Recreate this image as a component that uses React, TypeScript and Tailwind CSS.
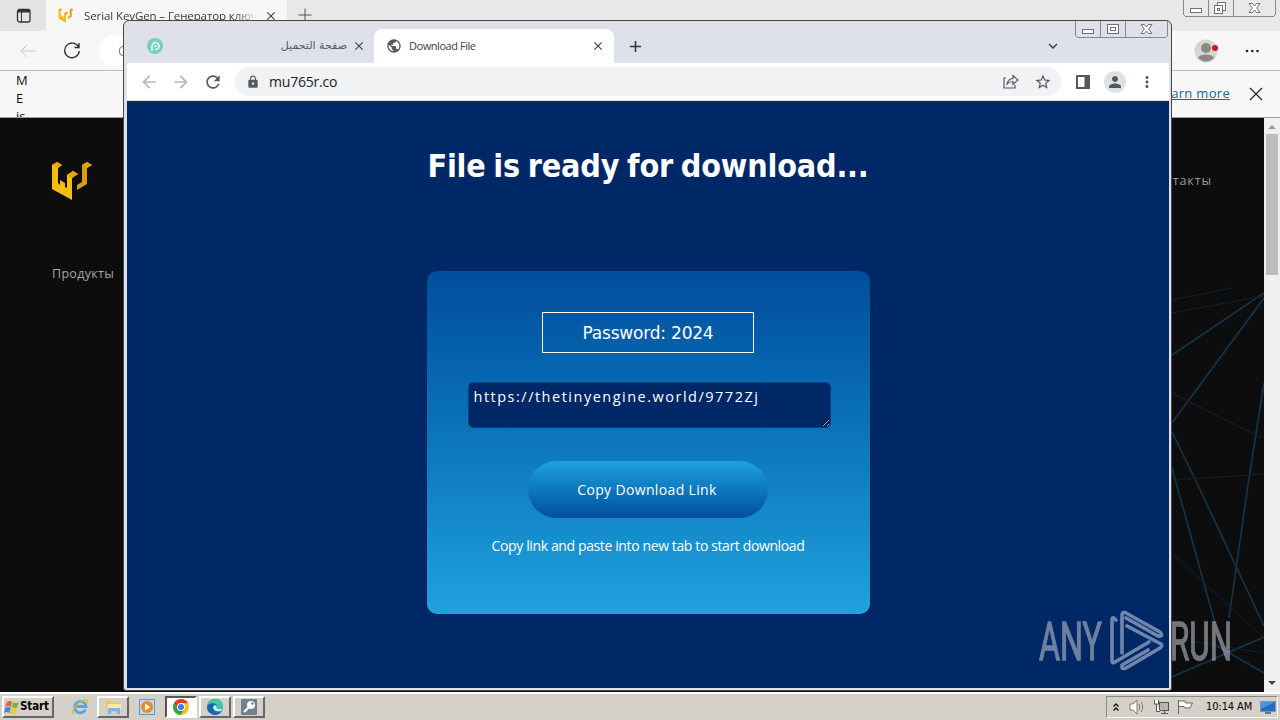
import type { ReactNode } from 'react';
import {
  MdArrowBack,
  MdArrowForward,
  MdClose,
  MdAdd,
  MdLock,
  MdMoreVert,
  MdPerson,
  MdPublic,
  MdRefresh,
  MdStarBorder,
  MdKeyboardArrowDown,
} from 'react-icons/md';

function KeygenLogo({ className }: { className?: string }) {
  return (
    <svg viewBox="0 0 40 40" className={className}>
      <path d="M0 4 L5 1 L10 4 L6 7 V22 L8 24 V19 L13 22 V26 L15 27 V14 L21 10 L26 13 L20 17 V39 L0 28Z" fill="#f9bd10" />
      <path d="M30 4 L35 1 L40 4 L35 7 V23 L25 29 V24 L30 21Z" fill="#dc9c0c" />
      <path d="M0 4 L5 1 L10 4 L6 7Z M15 14 L21 10 L26 13 L20 17Z M30 4 L35 1 L40 4 L35 7Z" fill="#eaa30a" />
    </svg>
  );
}

/* Classic caption buttons, hanging from the top edge of a window */
function CaptionButtons({ restore }: { restore?: boolean }) {
  return (
    <svg width="93" height="17" viewBox="0 0 93 17" fill="none" stroke="#6f7277" shapeRendering="crispEdges">
      <path d="M.5 0 V14.5 L2.5 16.5 H90.5 L92.5 14.5 V0 M25.5 0 V16 M50.5 0 V16" stroke="#85888d" />
      <rect x="7.5" y="8.5" width="11" height="4" rx="1" fill="#fff" />
      {restore ? (
        <g fill="#fff">
          <rect x="34.5" y="2.5" width="8" height="8" />
          <rect x="31.5" y="5.5" width="8" height="8" />
          <rect x="34.5" y="8.5" width="2" height="2" />
        </g>
      ) : (
        <g fill="#fff">
          <rect x="32.5" y="3.5" width="11" height="9" rx="1" />
          <rect x="35.5" y="6.5" width="5" height="3" />
        </g>
      )}
      <path
        d="M66 3.5 H69.5 L71.5 6 L73.500 3.5 H77 L73.700 8 L77 12.500 H73.500 L71.500 10 L69.500 12.500 H66 L69.300 8Z"
        fill="#fff"
        shapeRendering="auto"
      />
    </svg>
  );
}

function EdgeWindow() {
  return (
    <div className="flex h-[692px] w-full flex-col">
      <div className="flex h-[31px] bg-[#e8e8e8]">
        <div className="flex w-[46px] items-center justify-center rounded-br bg-[#e3e3e3]">
          <svg width="16" height="16" viewBox="0 0 16 16" fill="none" stroke="#333" className="ml-0.5">
            <rect x="1.500" y="1.500" width="12.500" height="12.500" rx="2" strokeWidth="1.300" />
            <path d="M2 3 H14" strokeWidth="3" />
            <path d="M5.500 4 V14" />
          </svg>
        </div>
        <div className="flex w-[241px] items-center bg-[#f7f7f7] pl-3">
          <KeygenLogo className="h-[15px] w-4" />
          <span className="ml-2.5 w-[174px] overflow-hidden bg-gradient-to-r from-[#333] from-85% to-[#f7f7f7] bg-clip-text font-['Open_Sans',sans-serif] text-[11.500px] tracking-[-0.1px] whitespace-nowrap text-transparent">
            Serial KeyGen – Генератор ключ
          </span>
          <MdClose className="ml-1.5 size-3.5 text-[#444]" />
        </div>
        <svg width="14" height="14" className="mt-2 ml-[11px]" stroke="#555">
          <path d="M7 .5 V13.500 M.5 7 H13.500" />
        </svg>
        <div className="mr-[4px] ml-auto">
          <CaptionButtons restore />
        </div>
      </div>

      <div className="flex h-[40px] items-center border-b border-[#bcbcbc] bg-[#f7f7f7]">
        <svg width="16" height="14" className="ml-5" fill="none" stroke="#c9c9c9">
          <path d="M16 7 H1 M7 1 L1 7 L7 13" />
        </svg>
        <svg width="18" height="18" className="ml-[27px]" fill="none" stroke="#333" strokeWidth="1.400">
          <path d="M15.500 5 A7.300 7.300 0 1 0 16.300 9 M16 1 V5.500 H11.500" />
        </svg>
        <div className="ml-[18px] flex h-8 flex-1 items-center rounded-l-full bg-white pl-5">
          <div className="h-2.5 w-3 rounded-sm border border-[#777]" />
        </div>
        <div className="flex w-[110px] items-center bg-[#f7f7f7]">
          <svg width="26" height="24" viewBox="0 0 26 24" className="ml-6">
            <circle cx="12" cy="12" r="11.500" fill="#d5d5d2" />
            <circle cx="12" cy="9" r="5" fill="#8d8886" />
            <path d="M4 19 Q5 15.500 12 15.500 T20 19 Q12 26 4 19" fill="#8d8886" />
            <circle cx="21" cy="9" r="3" fill="#d8141c" />
          </svg>
          <svg width="14" height="4" className="ml-[25px]" fill="#222">
            <circle cx="2" cy="2" r="1.300" />
            <circle cx="7.300" cy="2" r="1.300" />
            <circle cx="12.500" cy="2" r="1.300" />
          </svg>
        </div>
      </div>

      <div className="flex h-[47px] justify-between overflow-hidden border-b border-[#999] bg-[#f7f7f7] font-['Open_Sans',sans-serif] text-[13px] text-[#111]">
        <p className="ml-4 w-4 leading-[18px]">M E is</p>
        <div className="flex items-center">
          <span className="tracking-[0.3px] text-[#1268a0] underline">Learn more</span>
          <svg width="14" height="14" className="mr-[17px] ml-[19px]" stroke="#222" strokeWidth="1.200">
            <path d="M1 1 L13 13 M13 1 L1 13" />
          </svg>
        </div>
      </div>

      <div className="flex flex-1 bg-[#0d0d0d]">
        <div className="pt-[43px] pl-[52px] font-['Open_Sans',sans-serif] text-[12.500px] text-[#a6a6a6]">
          <KeygenLogo className="h-10 w-10" />
          <p className="mt-[64px] leading-[18px] tracking-[0.3px]">Продукты</p>
        </div>
        <div className="relative ml-auto w-[92px]">
          <svg width="92" height="574" fill="none" stroke="#14344b" strokeWidth="1.700" className="absolute inset-0">
            <path d="M0 237 L92 175 M0 305 L92 180 M0 314 L23 361 L92 508 M0 350 L43 505 M92 265 L77 360 L57 500 M0 559 L92 519 M40 525 L92 555" />
            <path d="M0 275 L90 320 M2 362 L92 356 M0 435 L92 520 M0 520 L92 535 M0 182 L60 170 M0 195 L92 178" stroke="#102331" strokeWidth="1" />
          </svg>
          <p className="absolute top-[54px] right-[52px] font-['Open_Sans',sans-serif] text-[12.500px] leading-[18px] tracking-[0.9px] text-[#999]">
            Контакты
          </p>
        </div>
        <div className="flex w-4 flex-col items-center bg-[#f0f0f0] py-[7px]">
          <svg width="8" height="4" fill="#999">
            <path d="M0 4 L4 0 L8 4Z" />
          </svg>
          <div className="mt-[5px] h-[141px] w-3 bg-[#bdbdbd]" />
          <svg width="8" height="4" className="mt-auto" fill="#444">
            <path d="M0 0 L4 4 L8 0Z" />
          </svg>
        </div>
      </div>
    </div>
  );
}

function DownloadPage() {
  return (
    <div className="flex flex-1 flex-col items-center bg-[#002766] text-white">
      <h1 className="mt-[45px] font-['DejaVu_Sans_Condensed','DejaVu_Sans',sans-serif] text-[32px] leading-10 font-bold tracking-[-0.2px] [word-spacing:-2px] whitespace-nowrap">
        File is ready for download...
      </h1>
      <div className="mt-[85px] ml-px flex h-[343px] w-[443px] flex-col items-center rounded-[10px] bg-gradient-to-b from-[#034d9b] to-[#1fa2dd]">
        <div className="mt-[41px] mr-px flex h-[41px] w-[212px] items-center justify-center border border-white pt-0.5 font-['DejaVu_Sans',sans-serif] text-[17px] tracking-[-0.2px]">
          Password: 2024
        </div>
        <textarea
          readOnly
          value="https://thetinyengine.world/9772Zj"
          className="mt-[29px] ml-[1px] block h-[46px] w-[363px] resize overflow-hidden rounded-[5px] border border-[#07417f] bg-[#002766] px-[5px] py-1 font-['Open_Sans',sans-serif] text-[14.500px] leading-5 tracking-[1.500px] text-white"
        />
        <button className="mt-[33px] mr-px h-[57px] w-[240px] rounded-full bg-gradient-to-b from-[#1fa2dd] to-[#044f9f] pr-0.5 font-['Open_Sans',sans-serif] text-[14px] tracking-[0.35px]">
          Copy Download Link
        </button>
        <p className="mt-[18px] mr-px font-['Open_Sans',sans-serif] text-[14px] leading-5 tracking-[-0.38px] whitespace-nowrap">
          Copy link and paste into new tab to start download
        </p>
      </div>
    </div>
  );
}

function ChromeWindow() {
  return (
    <div className="absolute top-[20px] left-[123px] flex h-[671px] w-[1049px] flex-col rounded-t-[6px] rounded-b-[3px] border border-[#424746] bg-[#dee1e9] pr-[2px] pb-[2px] pl-[3px]">
      <div className="flex h-[42px] shrink-0 pt-2">
        <div className="flex w-[247px] items-center pl-5">
          <svg width="16" height="16" viewBox="0 0 16 16">
            <circle cx="8" cy="8" r="8" fill="#79cdbb" />
            <path d="M5 13 V8 A3.500 3.500 0 1 1 8 11.500" fill="none" stroke="#e5fff8" strokeWidth="1.500" />
            <circle cx="8.500" cy="8" r="1.300" fill="#e5fff8" />
          </svg>
          <span className="ml-auto font-['DejaVu_Sans',sans-serif] text-[11px] whitespace-nowrap text-[#555b62]" dir="rtl">
            صفحة التحميل
          </span>
          <MdClose className="mr-2 ml-[5px] size-3.5 text-[#3f4246]" />
        </div>
        <div className="flex w-[240px] items-center rounded-t-lg bg-white pl-3">
          <MdPublic className="size-4 text-[#55595e]" />
          <span className="ml-[7px] font-['Open_Sans',sans-serif] text-[11px] tracking-[-0.45px] text-[#3c4043]">Download File</span>
          <MdClose className="mr-[9px] ml-auto size-3.5 text-[#3f4246]" />
        </div>
        <MdAdd className="mt-2 ml-3 size-[19px] text-[#33373b]" />
        <MdKeyboardArrowDown className="mt-2 mr-[13px] ml-auto size-[18px] text-[#3c4043]" />
        <div className="-mt-2 mr-px w-[93px]">
          <CaptionButtons />
        </div>
      </div>
      <div className="flex h-[38px] shrink-0 items-center border-b border-[#dfe3ec] bg-white text-[#55595e]">
        <MdArrowBack className="ml-3 size-5 text-[#b5b7b9]" />
        <MdArrowForward className="ml-3 size-5 text-[#b5b7b9]" />
        <MdRefresh className="ml-3 size-5" />
        <div className="ml-3 flex h-[29px] w-[826px] items-center rounded-full bg-[#f0f2f4] pl-[11px]">
          <MdLock className="size-[14px]" />
          <span className="ml-[9px] font-['Open_Sans',sans-serif] text-[14px] leading-5 tracking-[-0.2px] text-[#202124]">mu765r.co</span>
          <svg width="16" height="15" viewBox="0 0 16 15" className="ml-auto" fill="none" stroke="currentColor" strokeWidth="1.200">
            <path d="M3 4 H1 V14 H12 V11" />
            <path d="M4 10 Q5 5 10 4.500 V1.500 L15 6 L10 10.500 V7.500 Q6.500 7.500 4 10Z" />
          </svg>
          <MdStarBorder className="mr-[9px] ml-[15px] size-[18px]" />
        </div>
        <svg width="14" height="14" className="ml-[15px]" fill="none" stroke="#55595e">
          <rect x="1" y="1" width="12" height="12" strokeWidth="2" />
          <path d="M11 1 V13" strokeWidth="5" />
        </svg>
        <div className="ml-[14px] flex size-[22px] items-center justify-center rounded-full bg-[#dee1e6]">
          <MdPerson className="size-[18px]" />
        </div>
        <MdMoreVert className="ml-3 size-[18px]" />
      </div>
      <DownloadPage />
    </div>
  );
}

function Watermark() {
  return (
    <svg width="200" height="64" viewBox="0 0 200 64" className="absolute top-[609px] left-[1038px] opacity-60" fill="#b9bdc6">
      <g fontFamily="Roboto, sans-serif" fontSize="53" stroke="#b9bdc6" strokeWidth="1.300">
        <text x="1" y="51" textLength="63" lengthAdjust="spacingAndGlyphs">ANY</text>
        <text x="132" y="51" textLength="62" lengthAdjust="spacingAndGlyphs">RUN</text>
      </g>
      <g fill="none" stroke="#b9c6dc" strokeWidth="3.600" strokeLinejoin="round" strokeLinecap="round">
        <path d="M78 11 Q74 6 74 12 V52 Q74 55 77 53 L111 33" />
        <path d="M84 44 V6 Q84 2 88 4 L122 23 Q126 28 120 27 L88 9" />
        <path d="M89 17 L123 35 Q125 37 122 39 L88 59 Q83 61 84 56 L110 41" />
      </g>
    </svg>
  );
}

function TaskButton({ active, children }: { active?: boolean; children: ReactNode }) {
  return (
    <div
      className={
        active
          ? 'flex h-[22px] w-8 items-center justify-center border-2 border-t-[#555] border-r-white border-b-white border-l-[#555] bg-white'
          : 'flex h-[22px] w-8 items-center justify-center border-2 border-t-white border-r-[#666] border-b-[#666] border-l-white bg-[#d5d1c9]'
      }
    >
      {children}
    </div>
  );
}

function Taskbar() {
  return (
    <div className="flex h-7 items-center border-t-2 border-white bg-[#d5d0c8]">
      <div className="ml-0.5 flex h-[22px] w-[52px] items-center border-2 border-t-white border-r-[#666] border-b-[#666] border-l-white font-['DejaVu_Sans_Condensed',sans-serif] text-[11.500px] font-bold tracking-[-0.1px] text-black">
        <svg width="16" height="15" viewBox="0 0 16 15" className="shrink-0">
          <path d="M3 2 Q6 0 8 2 L7 7 Q4 5 1 7Z" fill="#ec6330" />
          <path d="M9 2 Q12 4 15 2 L13 8 Q11 9 8 7Z" fill="#76b83e" />
          <path d="M1 8 Q4 6 7 8 L5 13 Q3 11 0 13Z" fill="#3b8bdd" />
          <path d="M8 8 Q11 10 13 9 L11 14 Q8 15 6 13Z" fill="#f7c52e" />
        </svg>
        Start
      </div>

      <svg width="18" height="18" viewBox="0 0 18 18" className="ml-[17px]" fill="none">
        <path d="M14.500 11.500 A5.700 5.700 0 1 1 15 8.500 H5" stroke="#46ace2" strokeWidth="2.800" />
        <path d="M3 15 C-3 17 8 1 16 2 Q18 3 15 6" stroke="#e6b83b" strokeWidth="1.300" />
      </svg>
      <div className="ml-[8px]">
        <TaskButton>
          <svg width="17" height="16" viewBox="0 0 17 16">
            <path d="M1 2 H7 L8 4 H15 V13 H1Z" fill="#eec957" />
            <path d="M3 5 H16 V11 H2Z" fill="#fae9a0" />
            <path d="M3 15 V9 H15 V15 H12 V12 H6 V15Z" fill="#72b9df" />
          </svg>
        </TaskButton>
      </div>
      <svg width="16" height="16" viewBox="0 0 16 16" className="ml-[10px]">
        <rect x=".5" y=".5" width="15" height="15" fill="#b8dcf3" stroke="#579acb" />
        <circle cx="8" cy="8" r="6" fill="#f18b1d" />
        <path d="M6 4.500 L11.500 8 L6 11.500Z" fill="#fff" />
      </svg>
      <div className="ml-[10px] flex gap-[2px]">
        <TaskButton active>
          <svg width="16" height="16" viewBox="0 0 16 16">
            <circle cx="8" cy="8" r="8" fill="#fbc116" />
            <path d="M1.100 4 A8 8 0 0 1 14.900 4 H8 L4.500 10Z" fill="#e33b2e" />
            <path d="M1.100 4 A8 8 0 0 0 7.500 16 L11.500 10 H4.500Z" fill="#2da24c" />
            <circle cx="8" cy="8" r="4" fill="#fff" />
            <circle cx="8" cy="8" r="3" fill="#3b7de8" />
          </svg>
        </TaskButton>
        <TaskButton>
          <svg width="16" height="16" viewBox="0 0 16 16">
            <circle cx="8" cy="8" r="8" fill="#1877c9" />
            <path d="M0 7 Q2 0 9 0 Q16 1 16 7 Q15 11 10 10 Q11 5 6 4 Q2 4 0 7" fill="#43c9a0" />
            <path d="M6 8 Q6 13 14 12 L16 9 Q14 11 10 10 Q10 7 8 6 Q6 6 6 8" fill="#d8f0f3" />
            <path d="M0 8 Q3 3 8 6 Q5 7 6 11 Q8 15 14 13 Q10 17 5 15 Q0 13 0 8" fill="#1667b4" />
          </svg>
        </TaskButton>
        <TaskButton>
          <svg width="16" height="16" viewBox="0 0 16 16">
            <rect width="16" height="16" rx="1" fill="#718089" />
            <circle cx="10" cy="6" r="4" fill="#fff" />
            <circle cx="11.500" cy="4.500" r="1.200" fill="#718089" />
            <path d="M8 8 L3 13" stroke="#fff" strokeWidth="2.200" />
          </svg>
        </TaskButton>
      </div>

      <div className="mr-0.5 ml-auto flex h-[22px] w-[172px] items-center border border-t-[#888] border-r-white border-b-white border-l-[#888]">
        <svg width="6" height="8" className="ml-[6px]" fill="none" stroke="#111" strokeWidth="1.300">
          <path d="M.5 3.500 L3 1 L5.500 3.500 M.5 7.500 L3 5 L5.500 7.500" />
        </svg>
        <svg width="17" height="16" viewBox="0 0 17 16" className="ml-[10px]" fill="none" stroke="#777">
          <path d="M1 5 H4 L8 1 V15 L4 11 H1Z" fill="#fff" />
          <path d="M10 5 Q12 8 10 11 M12 3 Q15.500 8 12 13" />
        </svg>
        <svg width="17" height="16" viewBox="0 0 17 16" className="ml-[7px]" fill="#fff" stroke="#555">
          <rect x="6.500" y="3.500" width="9" height="8" fill="#b5b5b2" />
          <path d="M8 14.500 H15 M11.500 12 V14" />
          <path d="M1.500 1 V5 H5.500 V1 M3.500 5 V12.500 H7" />
        </svg>
        <svg width="17" height="16" viewBox="0 0 17 16" className="ml-[7px]" fill="#fff" stroke="#666">
          <path d="M1.500 1 V15 M2 2 H8 L9 4 H15.500 L13 9 H8 L7 7.500 H2" />
        </svg>
        <span className="ml-[12px] w-[48px] font-['DejaVu_Sans_Condensed',sans-serif] text-[11px] tracking-[-0.1px] whitespace-nowrap text-black">
          10:14 AM
        </span>
        <svg width="16" height="13" viewBox="0 0 16 13" className="ml-[6px]">
          <rect x=".5" y=".5" width="15" height="10" fill="#236dc1" stroke="#7098bd" />
          <path d="M1 8 L15 1 V1 H1Z" fill="#4a92dc" />
          <path d="M5 12 H11" stroke="#5d7890" strokeWidth="2" />
        </svg>
      </div>
    </div>
  );
}

export default function App() {
  return (
    <div className="relative h-[720px] w-[1280px] overflow-hidden">
      <EdgeWindow />
      <Taskbar />
      <ChromeWindow />
      <Watermark />
    </div>
  );
}
